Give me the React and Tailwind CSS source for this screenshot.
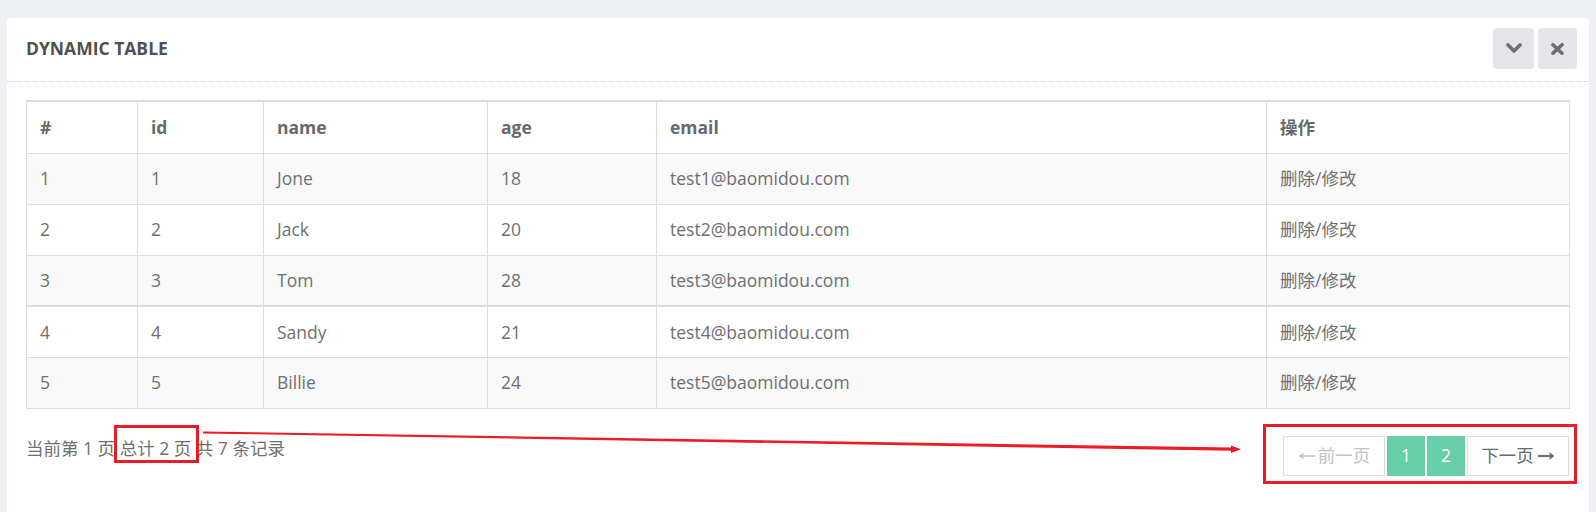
import React from "react";

const rows = [
  [1, 1, "Jone", 18, "test1@baomidou.com"],
  [2, 2, "Jack", 20, "test2@baomidou.com"],
  [3, 3, "Tom", 28, "test3@baomidou.com"],
  [4, 4, "Sandy", 21, "test4@baomidou.com"],
  [5, 5, "Billie", 24, "test5@baomidou.com"],
];

const heads = ["#", "id", "name", "age", "email", "操作"];

export default function App() {
  return (
    <div className="relative min-h-[512px] overflow-hidden bg-[#eef0f4] pt-[18px] px-[7px] font-['Open_Sans','Noto_Sans_CJK_SC',sans-serif] text-[#6f6f71]">
      <div className="bg-white rounded-t-[4px] h-[494px]">
        <div className="h-[64px] border-b border-dotted border-[#c9c9c9] flex justify-between pl-[19px] pr-[12px]">
          <h5 className="mt-[17px] text-[17.5px] leading-[26px] font-bold text-[#505050]">DYNAMIC TABLE</h5>
          <div className="flex gap-[4px] mt-[10px]">
            <button className="w-[41px] h-[41px] rounded-[4px] bg-[#e4e5e9] flex items-center justify-center">
              <svg width="16" height="11" viewBox="0 0 16 11">
                <polyline points="2,2 8,8 14,2" fill="none" stroke="#6e6e6e" strokeWidth="3.6" strokeLinecap="round" strokeLinejoin="round" />
              </svg>
            </button>
            <button className="w-[39px] h-[41px] rounded-[4px] bg-[#e4e5e9] flex items-center justify-center">
              <svg width="13" height="12" viewBox="0 0 13 12">
                <path d="M2 1.8 L11 10.2 M11 1.8 L2 10.2" fill="none" stroke="#6e6e6e" strokeWidth="3.6" strokeLinecap="round" />
              </svg>
            </button>
          </div>
        </div>
        <div className="pt-[18px] px-[19px]">
          <table className="w-full table-fixed border-collapse text-[17.5px]">
            <colgroup>
              <col className="w-[111px]" />
              <col className="w-[126px]" />
              <col className="w-[224px]" />
              <col className="w-[169px]" />
              <col className="w-[610px]" />
              <col />
            </colgroup>
            <thead>
              <tr>
                {heads.map((h) => (
                  <th
                    key={h}
                    className="h-[52px] border border-t-2 border-[#dddddd] px-[13px] text-left font-bold text-[#676a6c]"
                  >
                    {h}
                  </th>
                ))}
              </tr>
            </thead>
            <tbody>
              {rows.map((r, i) => (
                <tr key={i} className={i % 2 === 0 ? "bg-[#f9f9f9]" : "bg-white"}>
                  {[...r, "删除/修改"].map((c, j) => (
                    <td
                      key={j}
                      className={
                        "h-[51px] border border-[#dddddd] px-[13px] font-normal " +
                        (i === 3 ? "border-t-2" : "")
                      }
                    >
                      {c}
                    </td>
                  ))}
                </tr>
              ))}
            </tbody>
          </table>
          <div className="flex justify-between items-start mt-[27px] pr-[1px]">
            <div className="text-[17.5px] leading-[25px]">当前第 1 页 总计 2 页 共 7 条记录</div>
            <div className="flex gap-[2px] text-[17.5px]">
              <span className="w-[102px] h-[40px] border border-[#dddddd] flex items-center justify-center gap-[2px] text-[#c3c3c3]">
                <svg width="18" height="10" viewBox="0 0 18 10">
                  <path d="M1 5 H17" stroke="#c3c3c3" strokeWidth="1.6" />
                  <path d="M1 5 L5.5 1.5 V8.5 Z" fill="#c3c3c3" />
                </svg>
                <span>前一页</span>
              </span>
              <span className="w-[38px] h-[40px] border border-[#67cfa7] bg-[#67cfa7] flex items-center justify-center text-white">
                1
              </span>
              <span className="w-[38px] h-[40px] border border-[#67cfa7] bg-[#67cfa7] flex items-center justify-center text-white">
                2
              </span>
              <span className="w-[102px] h-[40px] border border-[#dddddd] flex items-center justify-center gap-[3px] text-[#676a6c]">
                <span>下一页</span>
                <svg width="18" height="10" viewBox="0 0 18 10">
                  <path d="M1 5 H16" stroke="#6e6e6e" strokeWidth="2.2" />
                  <path d="M17.5 5 L12.5 1.3 V8.7 Z" fill="#6e6e6e" />
                </svg>
              </span>
            </div>
          </div>
        </div>
      </div>

      {/* annotations */}
      <div className="absolute left-[114px] top-[425px] w-[85px] h-[38px] border-[3px] border-[#ed1c24]" />
      <div className="absolute left-[1263px] top-[424px] w-[314px] h-[60px] border-[3px] border-[#ed1c24]" />
      <svg className="absolute left-0 top-0 pointer-events-none" width="1596" height="512">
        <polygon points="203,431.4 203,433.4 1232,450.8 1232,447.6" fill="#ed1c24" />
        <polygon points="1241,449.3 1231,445.5 1231,453" fill="#ed1c24" />
      </svg>
    </div>
  );
}
